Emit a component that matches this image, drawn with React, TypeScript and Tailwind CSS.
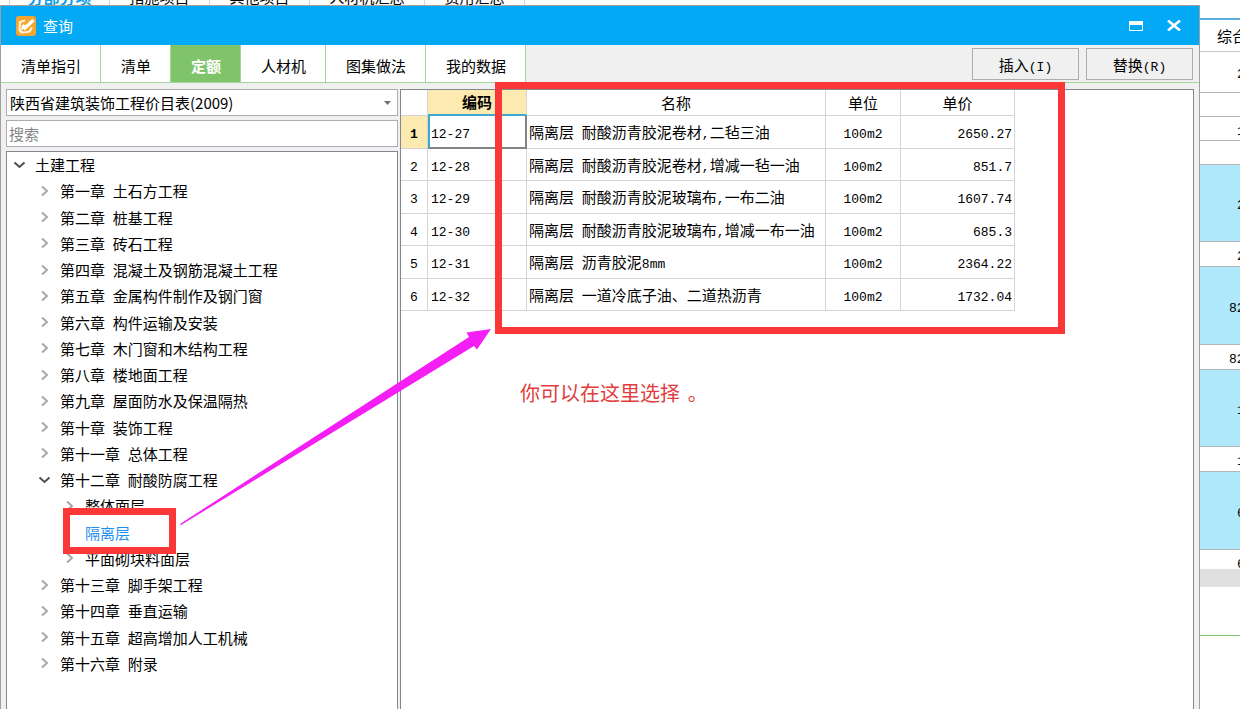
import { useState } from 'react';

interface TreeItem {
  name: string;
  level: number;
  open?: boolean;
  leaf?: boolean;
}

interface QuotaRow {
  code: string;
  name: string;
  unit: string;
  price: string;
}

const tabs = ['清单指引', '清单', '定额', '人材机', '图集做法', '我的数据'];

const treeItems: TreeItem[] = [
  { name: '土建工程', level: 0, open: true },
  { name: '第一章 土石方工程', level: 1 },
  { name: '第二章 桩基工程', level: 1 },
  { name: '第三章 砖石工程', level: 1 },
  { name: '第四章 混凝土及钢筋混凝土工程', level: 1 },
  { name: '第五章 金属构件制作及钢门窗', level: 1 },
  { name: '第六章 构件运输及安装', level: 1 },
  { name: '第七章 木门窗和木结构工程', level: 1 },
  { name: '第八章 楼地面工程', level: 1 },
  { name: '第九章 屋面防水及保温隔热', level: 1 },
  { name: '第十章 装饰工程', level: 1 },
  { name: '第十一章 总体工程', level: 1 },
  { name: '第十二章 耐酸防腐工程', level: 1, open: true },
  { name: '整体面层', level: 2 },
  { name: '隔离层', level: 2, leaf: true },
  { name: '平面砌块料面层', level: 2 },
  { name: '第十三章 脚手架工程', level: 1 },
  { name: '第十四章 垂直运输', level: 1 },
  { name: '第十五章 超高增加人工机械', level: 1 },
  { name: '第十六章 附录', level: 1 },
];

const rows: QuotaRow[] = [
  { code: '12-27', name: '隔离层 耐酸沥青胶泥卷材,二毡三油', unit: '100m2', price: '2650.27' },
  { code: '12-28', name: '隔离层 耐酸沥青胶泥卷材,增减一毡一油', unit: '100m2', price: '851.7' },
  { code: '12-29', name: '隔离层 耐酸沥青胶泥玻璃布,一布二油', unit: '100m2', price: '1607.74' },
  { code: '12-30', name: '隔离层 耐酸沥青胶泥玻璃布,增减一布一油', unit: '100m2', price: '685.3' },
  { code: '12-31', name: '隔离层 沥青胶泥8mm', unit: '100m2', price: '2364.22' },
  { code: '12-32', name: '隔离层 一道冷底子油、二道热沥青', unit: '100m2', price: '1732.04' },
];

const indents = ['pl-[6px]', 'pl-[31px]', 'pl-[56px]'];

// Latin runs are set in a half-width monospace next to the Chinese glyphs
function Mixed({ text }: { text: string }) {
  return (
    <span className="whitespace-pre">
      {text.split(/([\x20-\x7e]+)/).map((part, index) =>
        index % 2 === 1 ? (
          <span key={index} className="font-['Liberation_Mono',monospace] text-[13px] leading-none">{part}</span>
        ) : part
      )}
    </span>
  );
}

function Arrow({ open }: { open?: boolean }) {
  return (
    <svg viewBox="0 0 13 13" className={`h-[13px] w-[13px] shrink-0 ${open ? 'text-[#505050]' : 'text-[#a8a8a8]'}`} fill="none" stroke="currentColor" strokeWidth="2">
      {open ? <path d="M1.5 3.5 6.5 8 11.5 3.5" /> : <path d="M4 1.5 9 6 4 10.5" />}
    </svg>
  );
}

function AppIcon() {
  return (
    <svg viewBox="0 0 20 20" className="h-5 w-5">
      <rect width="20" height="20" rx="3" fill="#f5a52c" />
      <path d="M9 4.500 4 6l-.5 7q.5 3.500 4 3.500l6-1 2.500-4" fill="none" stroke="#fff3dc" strokeWidth="2.200" />
      <path d="M6.500 9 9 12 17.500 4" fill="none" stroke="#fff" strokeWidth="3.400" />
      <path d="M5.500 13.500 9 9.500" stroke="#fff" strokeWidth="2" />
    </svg>
  );
}

function BackgroundTabs() {
  return (
    <div className="flex h-[5px] shrink-0 items-end overflow-hidden bg-white pl-[9px] leading-4 whitespace-nowrap">
      <span className="w-[100px] border-l border-gray-300 text-center text-base leading-4 font-bold text-[#12a0e8]">分部分项</span>
      <span className="w-[100px] border-l border-gray-300 text-center">措施项目</span>
      <span className="w-[100px] border-l border-gray-300 text-center">其他项目</span>
      <span className="w-[115px] border-l border-gray-300 text-center">人材机汇总</span>
      <span className="w-[101px] border-x border-gray-300 text-center">费用汇总</span>
    </div>
  );
}

function BackgroundGrid() {
  const cell = 'flex shrink-0 items-center border-b border-[#b4b4b4]';
  return (
    <aside className="w-10 shrink-0 overflow-hidden bg-white pt-[13px] whitespace-nowrap">
      <div className="flex h-[34px] items-center border-t-2 border-b border-t-[#5bb0dc] border-b-[#c8c8c8] pl-[17px]">综合</div>
      <div className={`${cell} h-[41px] pl-[37px]`}><Mixed text="2" /></div>
      <div className={`${cell} h-6`} />
      <div className={`${cell} h-6 pl-[37px]`}><Mixed text="1" /></div>
      <div className={`${cell} h-6`} />
      <div className={`${cell} h-[77px] bg-[#aee8fa] pl-[37px]`}><Mixed text="2" /></div>
      <div className={`${cell} h-[25px] pl-[37px]`}><Mixed text="2" /></div>
      <div className={`${cell} h-[78px] bg-[#aee8fa] pl-[29px]`}><Mixed text="82" /></div>
      <div className={`${cell} h-[25px] pl-[29px]`}><Mixed text="82" /></div>
      <div className={`${cell} h-[77px] bg-[#aee8fa] pl-[37px]`}><Mixed text="1" /></div>
      <div className={`${cell} h-[25px] pl-[37px]`}><Mixed text="1" /></div>
      <div className={`${cell} h-[78px] bg-[#aee8fa] pl-[37px]`}><Mixed text="6" /></div>
      <div className="flex h-[19px] items-center pt-1 pl-[37px]"><Mixed text="6" /></div>
      <div className="h-[18px] bg-[#e0e0e0]" />
      <div className="h-[49px] border-b border-[#7fc36a]" />
    </aside>
  );
}

export default function App() {
  const [activeTab, setActiveTab] = useState('定额');
  const [selected, setSelected] = useState('隔离层');
  const [keyword, setKeyword] = useState('');

  return (
    <div className="relative flex h-screen flex-col overflow-hidden bg-white font-['Noto_Sans_CJK_SC',sans-serif] text-[15px] leading-5 text-black">
      <BackgroundTabs />
      <div className="flex min-h-0 flex-1">
        <main className="flex min-w-0 flex-1 flex-col border-x border-t border-[#a0a0a0] bg-[#f0f0f0]">
          <header className="flex h-[39px] shrink-0 items-center bg-[#03a9f4] pr-[18px] pl-[15px] text-white">
            <AppIcon />
            <h1 className="ml-[7px] flex-1">查询</h1>
            <button type="button" aria-label="最大化" className="mr-6">
              <svg viewBox="0 0 14 10" className="h-[10px] w-[14px]" fill="none" stroke="#fff">
                <path d="M0 2h14" strokeWidth="4" />
                <path d="M.5 2v7.500h13V2" />
              </svg>
            </button>
            <button type="button" aria-label="关闭">
              <svg viewBox="0 0 14 11" className="h-[11px] w-[14px]" stroke="#fff" strokeWidth="2.600">
                <path d="M1 .5 13 10.500M13 .5 1 10.500" />
              </svg>
            </button>
          </header>

          <div className="flex h-[38px] shrink-0 items-center border-b border-[#a5d59a] pr-[6px]">
            <nav className="flex flex-1 self-stretch">
              {tabs.map((tab) => (
                <button
                  key={tab}
                  type="button"
                  onClick={() => setActiveTab(tab)}
                  className={`border-r border-[#a5d59a] pt-1 pr-[19px] pl-5 ${tab === activeTab ? 'bg-[#7fc36a] font-bold text-white' : 'bg-white'}`}
                >
                  {tab}
                </button>
              ))}
            </nav>
            <button type="button" className="h-8 w-[107px] border border-[#adadad] pt-[2px]"><Mixed text="插入(I)" /></button>
            <button type="button" className="ml-[7px] h-8 w-[107px] border border-[#adadad] pt-[2px]"><Mixed text="替换(R)" /></button>
          </div>

          <div className="flex min-h-0 flex-1 gap-[2px] pt-[6px] pr-[5px] pl-[5px]">
            <section className="flex w-[392px] shrink-0 flex-col gap-1">
              <div className="relative shrink-0">
                <select aria-label="定额库" className="block h-[27px] w-full appearance-none border border-[#abadb3] bg-white pl-[3px]">
                  <option>陕西省建筑装饰工程价目表(2009)</option>
                </select>
                <svg viewBox="0 0 7 4" className="pointer-events-none absolute top-3 right-[7px] h-1 w-[7px]">
                  <path d="M0 0h7L3.500 4z" fill="#707070" />
                </svg>
              </div>
              <input
                aria-label="搜索"
                placeholder="搜索"
                value={keyword}
                onChange={(e) => setKeyword(e.target.value)}
                className="h-[27px] w-full shrink-0 border border-[#abadb3] bg-white pl-[2px] placeholder:text-[#858585]"
              />
              <div className="min-h-0 flex-1 overflow-hidden border border-b-0 border-[#828790] bg-white">
                <ul className="grid h-[525px] auto-rows-fr">
                  {treeItems.map((item) => (
                    <li key={item.name} className={`flex items-center ${indents[item.level]}`}>
                      {item.leaf ? <span className="w-[13px]" /> : <Arrow open={item.open} />}
                      <button
                        type="button"
                        onClick={() => setSelected(item.name)}
                        className={`ml-[9px] ${item.name === selected ? 'text-[#1e90f0]' : ''}`}
                      >
                        <Mixed text={item.name} />
                      </button>
                    </li>
                  ))}
                </ul>
              </div>
            </section>

            <section className="min-w-0 flex-1 overflow-hidden border border-b-0 border-[#828790] bg-white">
              <table className="h-[221px] w-[614px] table-fixed border-separate border-spacing-0">
                <thead>
                  <tr className="h-[26px]">
                    <th className="w-[27px] border-r border-b border-[#d4d4d4]" />
                    <th className="w-[99px] border-r border-b-2 border-r-[#d4d4d4] border-b-[#3fa9d0] bg-[#fdeab0] p-0 font-bold">编码</th>
                    <th className="w-[299px] border-r border-b border-[#d4d4d4] p-0 font-normal">名称</th>
                    <th className="w-[75px] border-r border-b border-[#d4d4d4] p-0 font-normal">单位</th>
                    <th className="w-[114px] border-r border-b border-[#d4d4d4] p-0 font-normal">单价</th>
                  </tr>
                </thead>
                <tbody>
                  {rows.map((row, index) => (
                    <tr key={row.code} className="h-8">
                      <th className={`border-r border-b border-[#d4d4d4] p-0 pt-px ${index === 0 ? 'bg-[#fdeab0] font-bold' : 'font-normal'}`}>
                        <Mixed text={String(index + 1)} />
                      </th>
                      <td className={`p-0 pt-px ${index === 0 ? 'border-r-2 border-b-2 border-l-2 border-r-[#808488] border-b-[#808488] border-l-[#3fa9d0] pl-px' : 'border-r border-b border-[#d4d4d4] pl-[3px]'}`}>
                        <Mixed text={row.code} />
                      </td>
                      <td className="border-r border-b border-[#d4d4d4] p-0 pt-px pl-[2px]"><Mixed text={row.name} /></td>
                      <td className="border-r border-b border-[#d4d4d4] p-0 pt-px text-center"><Mixed text={row.unit} /></td>
                      <td className="border-r border-b border-[#d4d4d4] p-0 pt-px pr-[2px] text-right"><Mixed text={row.price} /></td>
                    </tr>
                  ))}
                </tbody>
              </table>
            </section>
          </div>
        </main>
        <BackgroundGrid />
      </div>

      {/* callouts drawn over the window */}
      <div className="pointer-events-none absolute top-[82px] left-[495px] h-[252px] w-[570px] border-[7px] border-[#fb3737]" />
      <div className="pointer-events-none absolute top-[508px] left-[63px] h-[46px] w-[113px] border-[7px] border-[#fb3737]" />
      <svg viewBox="0 0 312 197" className="pointer-events-none absolute top-[328px] left-[180px] h-[197px] w-[312px]">
        <path d="M0 196 289 9 286.500 4.500 311 1 297 21.500 294 18 1 197z" fill="#f51ff5" />
      </svg>
      <p className="pointer-events-none absolute top-[381px] left-[520px] text-xl leading-6 text-[#e23c3c]">
        <Mixed text="你可以在这里选择 。" />
      </p>
    </div>
  );
}
